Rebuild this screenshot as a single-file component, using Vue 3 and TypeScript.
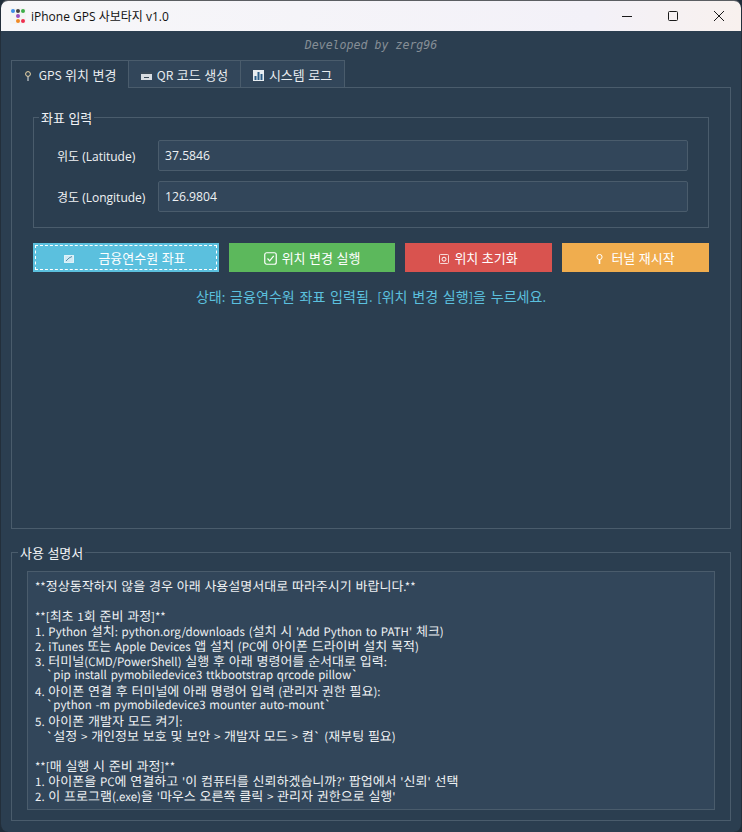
<script setup lang="ts">
import { h } from 'vue';

interface ActionButton {
  label: string;
  kind: string;
}

const actions: ActionButton[] = [
  { label: '금융연수원 좌표', kind: 'info' },
  { label: '위치 변경 실행', kind: 'success' },
  { label: '위치 초기화', kind: 'danger' },
  { label: '터널 재시작', kind: 'warning' }
];

const tabs = ['GPS 위치 변경', 'QR 코드 생성', '시스템 로그'];

const manual = `**정상동작하지 않을 경우 아래 사용설명서대로 따라주시기 바랍니다.**

**[최초 1회 준비 과정]**
1. Python 설치: python.org/downloads (설치 시 'Add Python to PATH' 체크)
2. iTunes 또는 Apple Devices 앱 설치 (PC에 아이폰 드라이버 설치 목적)
3. 터미널(CMD/PowerShell) 실행 후 아래 명령어를 순서대로 입력:
   \`pip install pymobiledevice3 ttkbootstrap qrcode pillow\`
4. 아이폰 연결 후 터미널에 아래 명령어 입력 (관리자 권한 필요):
   \`python -m pymobiledevice3 mounter auto-mount\`
5. 아이폰 개발자 모드 켜기:
   \`설정 > 개인정보 보호 및 보안 > 개발자 모드 > 켬\` (재부팅 필요)

**[매 실행 시 준비 과정]**
1. 아이폰을 PC에 연결하고 '이 컴퓨터를 신뢰하겠습니까?' 팝업에서 '신뢰' 선택
2. 이 프로그램(.exe)을 '마우스 오른쪽 클릭 > 관리자 권한으로 실행'`;

const manualLines = manual.split('\n');

// hangul sits a size above latin in the original font, so split the runs
const Txt = (p: { text: string }) =>
  p.text
    .split(/([\uac00-\ud7a3]+)/)
    .filter(Boolean)
    .map((t) => h('span', { class: /[\uac00-\ud7a3]/.test(t) ? 'ko' : undefined }, t));
</script>

<template>
  <div class="window">
    <header class="titlebar">
      <svg class="app-icon" width="16" height="16" viewBox="0 0 16 16">
        <rect width="16" height="16" rx="2" fill="#f4f4f4" />
        <circle cx="3" cy="3" r="2" fill="#3f8fe8" />
        <circle cx="8" cy="3" r="2" fill="#444" />
        <circle cx="13" cy="3" r="2" fill="#3fae49" />
        <circle cx="8" cy="8" r="2" fill="#9a4fc0" />
        <circle cx="8" cy="13" r="2" fill="#f08a24" />
        <circle cx="13" cy="13" r="2" fill="#ee2f4f" />
      </svg>
      <span class="app-title">iPhone GPS 사보타지 v1.0</span>
      <div class="win-controls">
        <svg width="12" height="12" viewBox="0 0 12 12"><path d="M1 6.5h10" stroke="#1a1a1a" fill="none" /></svg>
        <svg width="12" height="12" viewBox="0 0 12 12"><rect x="1.5" y="1.5" width="9" height="9" rx="1" stroke="#1a1a1a" fill="none" /></svg>
        <svg width="12" height="12" viewBox="0 0 12 12"><path d="M1 1l10 10M11 1L1 11" stroke="#1a1a1a" fill="none" /></svg>
      </div>
    </header>

    <main class="content">
      <p class="dev-note">Developed by zerg96</p>

      <nav class="tabs">
        <div v-for="(tab, i) in tabs" :key="tab" class="tab" :class="{ active: i === 0 }">
          <svg v-if="i === 0" class="tab-icon" width="8" height="10" viewBox="0 0 8 10">
            <circle cx="4" cy="3" r="2.4" fill="none" stroke="#f0d9a8" />
            <path d="M4 5.5V10" stroke="#e9e9e9" fill="none" />
          </svg>
          <svg v-else-if="i === 1" class="tab-icon" width="11" height="8" viewBox="0 0 11 8">
            <rect width="11" height="8" fill="#d8dde2" />
            <rect width="11" height="2" fill="#3a4a58" />
            <path d="M3 5.5h5" stroke="#3a4a58" fill="none" />
          </svg>
          <svg v-else class="tab-icon" width="11" height="11" viewBox="0 0 11 11">
            <rect width="11" height="11" fill="#e8edf1" />
            <path d="M2.5 10V6M5.5 10V2M8.5 10V4" stroke="#2b5c86" stroke-width="2" fill="none" />
          </svg>
          <span><Txt :text="tab" /></span>
        </div>
      </nav>

      <section class="tab-panel">
        <fieldset class="coord-group">
          <legend><Txt text="좌표 입력" /></legend>
          <div class="field">
            <label>위도 (Latitude)</label>
            <div class="input">37.5846</div>
          </div>
          <div class="field">
            <label>경도 (Longitude)</label>
            <div class="input">126.9804</div>
          </div>
        </fieldset>

        <div class="actions">
          <button v-for="(a, i) in actions" :key="a.kind" class="btn" :class="a.kind">
            <svg v-if="i === 0" class="btn-icon gap-wide" width="10" height="8" viewBox="0 0 10 8">
              <rect x="0.5" y="0.5" width="9" height="7" fill="#cfeaf5" stroke="#fff" stroke-opacity=".7" />
              <path d="M2 6l3-3 3-1.5" stroke="#5a8fa8" fill="none" />
            </svg>
            <svg v-else-if="i === 1" class="btn-icon" width="13" height="13" viewBox="0 0 13 13">
              <rect x="0.75" y="0.75" width="11.5" height="11.5" rx="2" fill="none" stroke="#fff" stroke-width="1.2" />
              <path d="M3.5 6.5l2.2 2.4 4-5" fill="none" stroke="#fff" stroke-width="1.2" />
            </svg>
            <svg v-else-if="i === 2" class="btn-icon" width="10" height="10" viewBox="0 0 10 10">
              <rect x="0.5" y="0.5" width="9" height="9" rx="1" fill="none" stroke="#f6d8d6" />
              <circle cx="5" cy="5.2" r="2" fill="none" stroke="#fff" />
            </svg>
            <svg v-else class="btn-icon" width="7" height="10" viewBox="0 0 7 10">
              <circle cx="3.5" cy="3" r="2.6" fill="none" stroke="#fff" />
              <path d="M3.5 5.5V10" stroke="#fff" stroke-width="1.6" fill="none" />
            </svg>
            <span><Txt :text="a.label" /></span>
          </button>
        </div>

        <p class="status"><Txt text="상태: 금융연수원 좌표 입력됨. [위치 변경 실행]을 누르세요." /></p>
      </section>

      <fieldset class="manual-group">
        <legend><Txt text="사용 설명서" /></legend>
        <div class="manual-text">
          <div v-for="(line, i) in manualLines" :key="i" class="manual-line"><Txt :text="line" /></div>
        </div>
      </fieldset>
    </main>
  </div>
</template>

<style scoped>
.window {
  width: 742px;
  height: 832px;
  box-sizing: border-box;
  overflow: hidden;
  background: #2b3e50;
  border: 1px solid #232f3b;
  border-top-color: #5b5e62;
  border-bottom: none;
  border-radius: 8px;
  font-family: "Noto Sans CJK KR", "Open Sans", sans-serif;
  color: #fff;
  display: flex;
  flex-direction: column;
}

.titlebar {
  height: 30px;
  flex-shrink: 0;
  background: linear-gradient(90deg, #f7f7f9 0%, #f3f1f8 80%, #f8f1ee 100%);
  display: flex;
  align-items: center;
  padding-left: 9px;
  color: #111;
}

.app-title {
  margin-left: 5px;
  font-family: "Open Sans", "Noto Sans CJK KR", sans-serif;
  font-size: 12px;
}

.win-controls {
  margin-left: auto;
  display: flex;
  gap: 34px;
  padding-right: 16px;
}

.content {
  flex: 1;
  padding: 0 10px;
  min-height: 0;
}

.dev-note {
  margin: 0;
  height: 29px;
  padding-top: 7px;
  box-sizing: border-box;
  text-align: center;
  font-family: "DejaVu Sans Mono", monospace;
  font-style: italic;
  font-size: 11.6px;
  line-height: 14px;
  color: #868e96;
}

.tabs {
  display: flex;
  height: 28px;
}

.tab {
  width: 104px;
  border: 1px solid #4a5c6c;
  border-left: none;
  box-sizing: border-box;
  background: #32465a;
  font-size: 12px;
  word-spacing: 0.8px;
  color: #e8ecef;
  display: flex;
  align-items: center;
  justify-content: center;
  gap: 5px;
}

.tab:nth-child(2) {
  width: 112px;
}

.tab.active {
  width: 118px;
  background: #2b3e50;
  border-left: 1px solid #4a5c6c;
  border-bottom: none;
  gap: 7px;
}

.tab-icon {
  flex-shrink: 0;
  margin-top: 3px;
}

.tab-panel {
  height: 441px;
  box-sizing: border-box;
  width: 720px;
  border: 1px solid #4a5c6c;
  border-top: none;
  padding: 21px 21px 0;
  position: relative;
}

.tab-panel::before {
  content: "";
  position: absolute;
  top: -1px;
  left: 333px;
  right: -1px;
  border-top: 1px solid #4a5c6c;
}

fieldset {
  margin: 0;
  border: 1px solid #4a5c6c;
  min-width: 0;
}

legend {
  font-size: 12px;
  line-height: 17px;
  word-spacing: 0.8px;
  color: #f2f4f6;
  padding: 0 2px;
}

.coord-group {
  height: 119px;
  box-sizing: border-box;
  width: 676px;
  padding: 14px 20px 0 23px;
}

.coord-group legend {
  margin-left: -18px;
}

.field {
  display: flex;
  align-items: center;
  margin-bottom: 10px;
}

.field label {
  width: 101px;
  font-family: "Open Sans", "Noto Sans CJK KR", sans-serif;
  font-size: 12px;
  color: #f0f2f4;
}

.input {
  flex: 1;
  height: 31px;
  box-sizing: border-box;
  background: #32465a;
  border: 1px solid #4a5c6c;
  border-radius: 2px;
  padding-left: 6px;
  display: flex;
  align-items: center;
  font-family: "Open Sans", sans-serif;
  font-size: 12.2px;
  color: #eef1f3;
}

.actions {
  display: flex;
  gap: 10px;
  margin-top: 15px;
  width: 676px;
}

.btn {
  flex: 147px 0 0;
  height: 29px;
  border: none;
  padding: 0;
  color: #fff;
  font-family: inherit;
  font-size: 12px;
  word-spacing: 0.8px;
  display: flex;
  align-items: center;
  justify-content: center;
  gap: 5px;
}

.btn.info {
  flex-basis: 186px;
  background: #5bc0de;
  outline: 1px dashed #fff;
  outline-offset: -3px;
}

.btn.success {
  flex-basis: 166px;
  background: #5cb85c;
}

.btn.danger {
  background: #d9534f;
}

.btn.warning {
  background: #f0ad4e;
  gap: 8px;
}

.btn-icon {
  flex-shrink: 0;
  margin-top: 2px;
}

.gap-wide {
  margin-right: 19px;
  margin-left: -2px;
}

.status {
  margin: 15px 0 0;
  width: 676px;
  text-align: center;
  font-size: 13px;
  line-height: 19px;
  word-spacing: 1.8px;
  color: #5bc0de;
}

.manual-group {
  margin-top: 15px;
  height: 277px;
  width: 720px;
  box-sizing: border-box;
  padding: 10px 15px 0;
}

.manual-group legend {
  margin-left: -9px;
}

.manual-text {
  height: 239px;
  box-sizing: border-box;
  background: #32465a;
  border: 1px solid #4a5c6c;
  padding: 6px 7px;
  font-size: 11.5px;
  word-spacing: 1.2px;
  text-rendering: geometricPrecision;
  color: #eef1f3;
  white-space: pre;
  overflow: hidden;
}

.manual-line {
  height: 15px;
  line-height: 15px;
}
</style>

<style>
html, body {
  margin: 0;
  background: #1f2d3a;
}

.ko {
  font-size: 1.083em;
}

.manual-line span {
  display: inline-block;
  height: 15px;
}

.manual-line .ko {
  font-size: 13px;
}
</style>
